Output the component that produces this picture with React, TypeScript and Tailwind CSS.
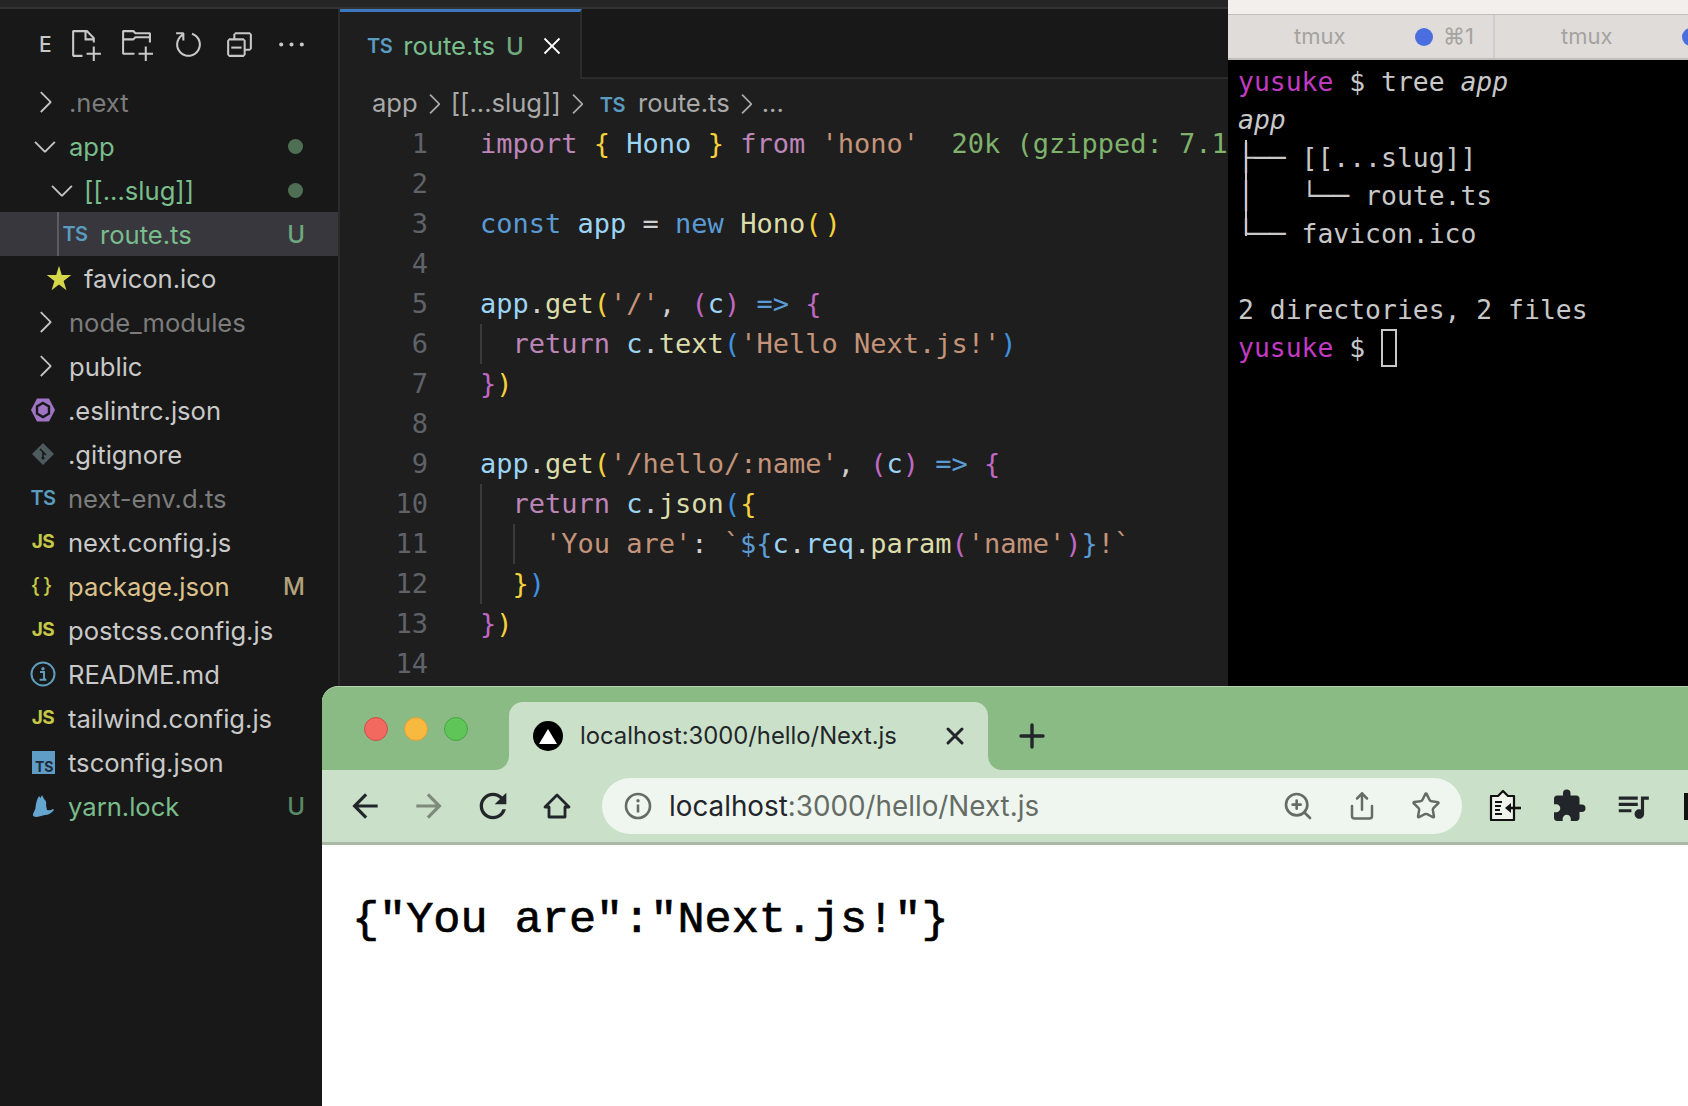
import React from "react";
import { VscNewFile, VscNewFolder, VscRefresh, VscCollapseAll, VscEllipsis, VscChevronRight, VscChevronDown, VscClose, VscStarFull } from "react-icons/vsc";
import { MdArrowBack, MdArrowForward, MdRefresh, MdExtension, MdOutlineQueueMusic } from "react-icons/md";
import { ZoomIn, Share, Star } from "lucide-react";

const P = "text-[#bd85b8]"; // keyword purple
const Y = "text-[#f5d23c]"; // yellow bracket
const V = "text-[#9cd4f5]"; // variable
const B = "text-[#5a9bd5]"; // const / new
const F = "text-[#dcdcaa]"; // function
const S = "text-[#c4947a]"; // string
const M = "text-[#c068c4]"; // pink bracket
const L = "text-[#3f93e0]"; // blue bracket
const W = "text-[#d0d0d0]"; // plain
const G = "text-[#7fb26b]"; // size hint

type Tok = [string, string];
const code: { indent: number; toks: Tok[] }[] = [
  { indent: 0, toks: [["import", P], [" ", W], ["{", Y], [" ", W], ["Hono", V], [" ", W], ["}", Y], [" ", W], ["from", P], [" ", W], ["'hono'", S], ["  20k (gzipped: 7.1k)", G]] },
  { indent: 0, toks: [] },
  { indent: 0, toks: [["const", B], [" ", W], ["app", V], [" = ", W], ["new", B], [" ", W], ["Hono", F], ["(", Y], [")", "ml-[3px] text-[#f5d23c]"]] },
  { indent: 0, toks: [] },
  { indent: 0, toks: [["app", V], [".", W], ["get", F], ["(", Y], ["'/'", S], [", ", W], ["(", M], ["c", V], [")", M], [" ", W], ["=>", B], [" ", W], ["{", M]] },
  { indent: 1, toks: [["return", P], [" ", W], ["c", V], [".", W], ["text", F], ["(", L], ["'Hello Next.js!'", S], [")", L]] },
  { indent: 0, toks: [["}", M], [")", Y]] },
  { indent: 0, toks: [] },
  { indent: 0, toks: [["app", V], [".", W], ["get", F], ["(", Y], ["'/hello/:name'", S], [", ", W], ["(", M], ["c", V], [")", M], [" ", W], ["=>", B], [" ", W], ["{", M]] },
  { indent: 1, toks: [["return", P], [" ", W], ["c", V], [".", W], ["json", F], ["(", L], ["{", Y]] },
  { indent: 2, toks: [["'You are'", S], [": ", W], ["`", S], ["${", B], ["c", V], [".", W], ["req", V], [".", W], ["param", F], ["(", M], ["'name'", S], [")", M], ["}", B], ["!`", S]] },
  { indent: 1, toks: [["}", Y], [")", L]] },
  { indent: 0, toks: [["}", M], [")", Y]] },
  { indent: 0, toks: [] },
];

const TsIcon = () => <span className="text-[20px] font-semibold tracking-[-0.5px] text-[#5a9cc0]">TS</span>;
const JsIcon = () => <span className="text-[19px] font-bold tracking-[-0.5px] text-[#c6c846]">JS</span>;
const Chevron = () => <VscChevronRight size={34} className="shrink-0 text-[#c4c4c4]" />;
const ChevronOpen = () => <VscChevronDown size={34} className="shrink-0 text-[#c4c4c4]" />;

const Eslint = () => (
  <svg width="26" height="26" viewBox="0 0 26 26">
    <polygon points="7,1.5 19,1.5 25,13 19,24.5 7,24.5 1,13" fill="#a074c4" />
    <polygon points="13,6 19,9.5 19,16.5 13,20 7,16.5 7,9.5" fill="#a074c4" stroke="#181818" strokeWidth="2.4" />
  </svg>
);
const Git = () => (
  <svg width="24" height="24" viewBox="0 0 24 24">
    <polygon points="12,1 23,12 12,23 1,12" fill="#4d5a5e" />
    <path d="M9 7l6 6M12 10v7" stroke="#181818" strokeWidth="1.6" fill="none" />
    <circle cx="12" cy="16" r="1.6" fill="#181818" />
  </svg>
);
const Info = () => (
  <svg width="26" height="26" viewBox="0 0 26 26">
    <circle cx="13" cy="13" r="11.5" fill="none" stroke="#5f9cbf" strokeWidth="2" />
    <circle cx="13" cy="7.8" r="1.7" fill="#5f9cbf" />
    <path d="M10 11h4v7.4h2M9.6 18.8h6.8" stroke="#5f9cbf" strokeWidth="2" fill="none" />
  </svg>
);
const TsConfig = () => (
  <span className="flex h-[23px] w-[23px] items-end justify-end bg-[#5f9cc6] pr-[1px] text-[14px] font-bold leading-[15px] text-[#1b2b38]">TS</span>
);
const Yarn = () => (
  <svg width="22" height="22" viewBox="0 0 22 22">
    <path d="M10 0l2 4q3 2 2 6l1 5q3 1 6-1l1 1q-4 5-9 5l-8 2q-5 0-4-3 3-5 3-10l1-4 2-4 1.5 2z" fill="#64a6cf" />
  </svg>
);

type Row = { label: string; color: string; icon: React.ReactNode; pad: string; gap: string; badge?: React.ReactNode; active?: boolean };

const dot = <span className="mr-[2px] block h-[15px] w-[15px] rounded-full bg-[#4f6f55]" />;
const gray = "text-[#7c7c7c]";
const plain = "text-[#c9c9c9]";
const green = "text-[#79bd8c]";
const badgeBase = "pt-[2px] text-[24px] font-medium";

const rows: Row[] = [
  { label: ".next", color: gray, icon: <Chevron />, pad: "pl-[32px]", gap: "mr-[11px]" },
  { label: "app", color: green, icon: <ChevronOpen />, pad: "pl-[32px]", gap: "mr-[11px]", badge: dot },
  { label: "[[...slug]]", color: green, icon: <ChevronOpen />, pad: "pl-[49px]", gap: "mr-[9px]", badge: dot },
  { label: "route.ts", color: green, icon: <TsIcon />, pad: "pl-[62px]", gap: "mr-[12px]", active: true, badge: <span className={`${badgeBase} text-[#6fa87f]`}>U</span> },
  { label: "favicon.ico", color: plain, icon: <VscStarFull size={28} className="shrink-0 text-[#d6d64a]" />, pad: "pl-[46px]", gap: "mr-[12px]" },
  { label: "node_modules", color: gray, icon: <Chevron />, pad: "pl-[32px]", gap: "mr-[11px]" },
  { label: "public", color: plain, icon: <Chevron />, pad: "pl-[32px]", gap: "mr-[11px]" },
  { label: ".eslintrc.json", color: plain, icon: <Eslint />, pad: "pl-[30px]", gap: "mr-[12px]" },
  { label: ".gitignore", color: plain, icon: <Git />, pad: "pl-[30px]", gap: "mr-[12px]" },
  { label: "next-env.d.ts", color: gray, icon: <TsIcon />, pad: "pl-[30px]", gap: "mr-[12px]" },
  { label: "next.config.js", color: plain, icon: <JsIcon />, pad: "pl-[30px]", gap: "mr-[12px]" },
  { label: "package.json", color: "text-[#dcc18c]", icon: <span className="text-[21px] font-medium tracking-[3px] text-[#c6c846]">{"{}"}</span>, pad: "pl-[30px]", gap: "mr-[12px]", badge: <span className={`${badgeBase} text-[#b3a27c]`}>M</span> },
  { label: "postcss.config.js", color: plain, icon: <JsIcon />, pad: "pl-[30px]", gap: "mr-[12px]" },
  { label: "README.md", color: plain, icon: <Info />, pad: "pl-[30px]", gap: "mr-[12px]" },
  { label: "tailwind.config.js", color: plain, icon: <JsIcon />, pad: "pl-[30px]", gap: "mr-[12px]" },
  { label: "tsconfig.json", color: plain, icon: <TsConfig />, pad: "pl-[30px]", gap: "mr-[12px]" },
  { label: "yarn.lock", color: green, icon: <Yarn />, pad: "pl-[30px]", gap: "mr-[12px]", badge: <span className={`${badgeBase} text-[#5b8a68]`}>U</span> },
];

function Sidebar() {
  return (
    <aside className="flex h-full w-[340px] shrink-0 flex-col border-r-2 border-[#2b2b2b] bg-[#181818] font-['Inter',sans-serif]">
      <div className="flex h-[71px] shrink-0 items-center pl-[39px] text-[#c8c8c8]">
        <span className="w-[29px] text-[21px] font-medium">E</span>
        <span className="flex w-[52px] justify-start"><VscNewFile size={33} /></span>
        <span className="flex w-[52px] justify-start"><VscNewFolder size={33} /></span>
        <span className="flex w-[51px] justify-start"><VscRefresh size={33} /></span>
        <span className="flex w-[52px] justify-start"><VscCollapseAll size={33} /></span>
        <VscEllipsis size={33} />
      </div>
      {rows.map((r) => (
        <div key={r.label} className={`flex h-[44px] shrink-0 items-center pr-[33px] ${r.pad} ${r.active ? "bg-[#37373d]" : ""}`}>
          {r.active && <span className="-ml-[5px] mr-[3px] h-full w-[2px] bg-[#5c5c60]" />}
          <span className={`flex w-[26px] shrink-0 items-center justify-center ${r.gap}`}>{r.icon}</span>
          <span className={`flex-1 whitespace-nowrap pt-[2px] text-[25.6px] ${r.color}`}>{r.label}</span>
          {r.badge}
        </div>
      ))}
    </aside>
  );
}

function Editor() {
  return (
    <main className="flex h-full min-w-0 flex-1 flex-col overflow-hidden bg-[#1e1e1e]">
      <div className="flex h-[70px] shrink-0 border-b-2 border-[#2b2b2b] bg-[#181818] font-['Inter',sans-serif]">
        <div className="-mb-[2px] flex h-[70px] w-[242px] items-center border-r-2 border-t-[3px] border-r-[#2b2b2b] border-t-[#3b78c0] bg-[#1e1e1e] pl-[27px]">
          <span className="mr-[11px]"><TsIcon /></span>
          <span className="pt-[2px] text-[25.6px] text-[#79bd8c]">route.ts</span>
          <span className="ml-[11px] pt-[2px] text-[24px] font-medium text-[#6fa87f]">U</span>
          <VscClose size={30} className="ml-[13px] text-white" />
        </div>
      </div>
      <div className="flex h-[45px] shrink-0 items-center pl-[32px] pt-[4px] font-['Inter',sans-serif] text-[25.6px] text-[#a9a9a9]">
        <span>app</span>
        <VscChevronRight size={32} className="mx-[0.5px]" />
        <span>[[...slug]]</span>
        <VscChevronRight size={32} className="mx-[0.5px]" />
        <span className="ml-[6px]"><TsIcon /></span>
        <span className="ml-[13px]">route.ts</span>
        <VscChevronRight size={32} />
        <span>...</span>
      </div>
      <div className="font-['DejaVu_Sans_Mono',monospace] text-[27px] leading-[40px]">
        {code.map((ln, i) => (
          <div key={i} className="flex h-[40px] whitespace-pre">
            <span className="mr-[52px] w-[88px] shrink-0 text-right text-[#5f6268]">{i + 1}</span>
            {Array.from({ length: ln.indent }).map((_, k) => (
              <span key={k} className="h-[40px] w-[32.5px] shrink-0 border-l-2 border-[#3a3a3a]" />
            ))}
            <span>
              {ln.toks.map((t, k) => (
                <span key={k} className={t[1]}>{t[0]}</span>
              ))}
            </span>
          </div>
        ))}
      </div>
    </main>
  );
}

const Prompt = () => <span className="text-[#c13ac1]">yusuke</span>;

function TermTab({ n }: { n: string }) {
  return (
    <div className="flex w-[267px] shrink-0 items-center border-r-2 border-[#cfcccb]">
      <span className="w-[187px] pl-[66px] text-[22px] text-[#a5a3a0]">tmux</span>
      <span className="h-[18px] w-[18px] shrink-0 rounded-full bg-[#4a6ee0]" />
      <span className="ml-[10px] whitespace-nowrap text-[22px] text-[#a5a3a0]">{n}</span>
    </div>
  );
}

function Terminal() {
  return (
    <section className="relative flex h-full w-[460px] shrink-0 flex-col bg-black">
      <div className="h-[14px] shrink-0 bg-[#f2efec]" />
      <div className="flex h-[46px] shrink-0 overflow-hidden border-b-2 border-t border-[#c0bdbb] bg-[#dfdcda] font-['Inter',sans-serif]">
        <TermTab n="⌘1" />
        <TermTab n="⌘2" />
      </div>
      <div className="whitespace-pre px-[10px] pt-[3px] font-['DejaVu_Sans_Mono',monospace] text-[26.4px] leading-[38px] text-[#c8c8c8]">
        <div><Prompt /> $ tree <i>app</i></div>
        <div><i>app</i></div>
        <div>├── [[...slug]]</div>
        <div>│   └── route.ts</div>
        <div>└── favicon.ico</div>
        <div>&nbsp;</div>
        <div>2 directories, 2 files</div>
        <div className="flex items-center"><Prompt /> $ <span className="inline-block h-[38px] w-[16px] border-2 border-[#c8c8c8]" /></div>
      </div>
      <span className="absolute left-[17px] top-[140px] h-[96px] w-[2px] bg-[#c8c8c8]" />
    </section>
  );
}

const HomeIcon = () => (
  <svg width="28" height="28" viewBox="0 0 28 28">
    <path d="M14 3L26 15h-4v10H6V15H2z" fill="none" stroke="currentColor" strokeWidth="2.8" strokeLinejoin="round" />
  </svg>
);

const TabClose = () => (
  <svg width="30" height="30" viewBox="0 0 30 30" className="shrink-0">
    <path d="M8 8l14 14M22 8L8 22" stroke="currentColor" strokeWidth="3" strokeLinecap="round" />
  </svg>
);

const TabPlus = () => (
  <svg width="30" height="30" viewBox="0 0 30 30" className="shrink-0">
    <path d="M15 4v22M4 15h22" stroke="currentColor" strokeWidth="3.4" strokeLinecap="round" />
  </svg>
);

const ClipboardIcon = () => (
  <svg width="34" height="34" viewBox="0 0 34 34">
    <path d="M3 7h7l5-5 5 5h6v24H3z" fill="#eef4ec" stroke="#111" strokeWidth="2.2" strokeLinejoin="round" />
    <path d="M7 13h7M7 17h6M7 21h5M7 25h7" stroke="#111" strokeWidth="2" />
    <path d="M33 19H20" stroke="#111" strokeWidth="2.6" />
    <path d="M23 14l-6 5 6 5z" fill="#111" />
  </svg>
);

function Browser() {
  return (
    <div className="absolute bottom-0 left-[322px] right-0 top-[686px] flex flex-col overflow-hidden rounded-tl-[16px] border-t border-[#b5d3ae] bg-white font-['Inter',sans-serif]">
      <div className="flex h-[83px] shrink-0 bg-[linear-gradient(#8bbb84_50%,#cbe0c8_50%)]">
        <div className="flex w-[187px] shrink-0 gap-[16px] rounded-br-[14px] bg-[#8bbb84] pl-[42px] pt-[30px]">
          <span className="h-[24px] w-[24px] rounded-full border border-[#c9524c] bg-[#f1695f]" />
          <span className="h-[24px] w-[24px] rounded-full border border-[#d9a13c] bg-[#f8b93f]" />
          <span className="h-[24px] w-[24px] rounded-full border border-[#46a546] bg-[#5fc558]" />
        </div>
        <div className="mt-[15px] flex w-[479px] shrink-0 items-center rounded-t-[14px] bg-[#cbe0c8] pl-[24px] text-[#22262a]">
          <span className="flex h-[30px] w-[30px] shrink-0 items-center justify-center rounded-full bg-black">
            <svg width="18" height="15" viewBox="0 0 18 15"><polygon points="9,0 18,15 0,15" fill="#fff" /></svg>
          </span>
          <span className="ml-[17px] w-[347px] whitespace-nowrap text-[23.8px]">localhost:3000/hello/Next.js</span>
          <span className="ml-[13px]"><TabClose /></span>
        </div>
        <div className="flex flex-1 items-center rounded-bl-[14px] bg-[#8bbb84] pl-[29px] pt-[15px] text-[#22262a]">
          <TabPlus />
        </div>
      </div>
      <div className="flex h-[75px] shrink-0 items-center overflow-hidden border-b-[3px] border-[#a8b8a5] bg-[#cbe0c8] pl-[11px] text-[#22262a]">
        <span className="flex w-[64px] shrink-0 justify-center"><MdArrowBack size={38} /></span>
        <span className="flex w-[64px] shrink-0 justify-center"><MdArrowForward size={38} className="text-[#7d8a7c]" /></span>
        <span className="flex w-[64px] shrink-0 justify-center"><MdRefresh size={40} /></span>
        <span className="flex w-[64px] shrink-0 justify-center"><HomeIcon /></span>
        <div className="ml-[13px] flex h-[56px] w-[860px] shrink-0 items-center rounded-full bg-[#eff6ef] pl-[22px] pr-[4px] text-[#656c66]">
          <svg width="28" height="28" viewBox="0 0 28 28" className="shrink-0">
            <circle cx="14" cy="14" r="12" fill="none" stroke="#656c66" strokeWidth="2.6" />
            <circle cx="14" cy="8.8" r="1.7" fill="#656c66" />
            <path d="M14 12.5v8" stroke="#656c66" strokeWidth="2.6" />
          </svg>
          <span className="ml-[17px] flex-1 whitespace-nowrap pt-[1px] text-[27.8px]">
            <span className="text-[#22262a]">localhost</span>:3000/hello/Next.js
          </span>
          <span className="flex w-[64px] justify-center"><ZoomIn size={32} strokeWidth={2} /></span>
          <span className="flex w-[64px] justify-center"><Share size={30} strokeWidth={2} /></span>
          <span className="flex w-[64px] justify-center"><Star size={30} strokeWidth={2} /></span>
        </div>
        <span className="ml-[11px] flex w-[64px] shrink-0 justify-center"><ClipboardIcon /></span>
        <span className="flex w-[64px] shrink-0 justify-center"><MdExtension size={36} /></span>
        <span className="flex w-[64px] shrink-0 justify-center"><MdOutlineQueueMusic size={38} /></span>
        <span className="ml-[19px] h-[27px] w-[8px] shrink-0 bg-[#111]" />
      </div>
      <div className="whitespace-pre pl-[30px] pt-[48px] font-['Liberation_Mono',monospace] text-[45.2px] leading-[54px] text-black [-webkit-text-stroke:0.7px_black]">
        {'{"You are":"Next.js!"}'}
      </div>
    </div>
  );
}

export default function App() {
  return (
    <div className="relative h-[1106px] w-[1688px] overflow-hidden bg-[#181818]">
      <div className="flex h-full flex-col">
        <div className="h-[9px] shrink-0 border-b-2 border-[#333333] bg-[#252525]" />
        <div className="flex min-h-0 flex-1">
          <Sidebar />
          <Editor />
        </div>
      </div>
      <div className="absolute bottom-0 right-0 top-0">
        <Terminal />
      </div>
      <Browser />
    </div>
  );
}
